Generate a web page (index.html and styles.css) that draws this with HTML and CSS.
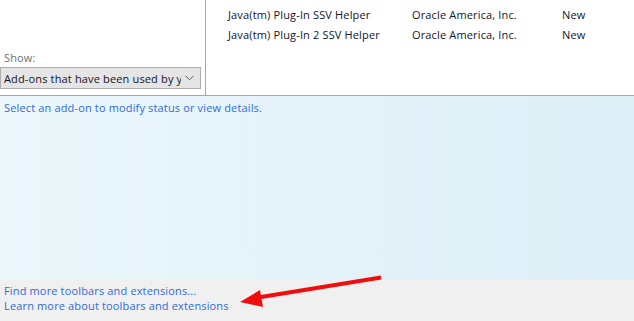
FILE: index.html
```html
<!DOCTYPE html>
<html>
<head>
<meta charset="utf-8">
<link rel="stylesheet" href="styles.css">
</head>
<body>
<div class="window">
  <div class="top">
    <div class="filter">
      <div class="show-label">Show:</div>
      <div class="select">
        <span class="select-text">Add-ons that have been used by your browser</span>
        <svg class="chev" width="9" height="6" viewBox="0 0 9 6"><path d="M0.5 0.8 L4.5 4.8 L8.5 0.8" fill="none" stroke="#5a5a5a" stroke-width="1"/></svg>
      </div>
    </div>
    <div class="list">
      <div class="row"><span class="c-name">Java(tm) Plug-In SSV Helper</span><span class="c-pub">Oracle America, Inc.</span><span class="c-status">New</span></div>
      <div class="row"><span class="c-name">Java(tm) Plug-In 2 SSV Helper</span><span class="c-pub">Oracle America, Inc.</span><span class="c-status">New</span></div>
    </div>
  </div>
  <div class="details">
    <span class="link">Select an add-on to modify status or view details.</span>
  </div>
  <div class="footer">
    <span class="link">Find more toolbars and extensions...</span>
    <span class="link">Learn more about toolbars and extensions</span>
  </div>
  <svg class="arrow" width="634" height="321" viewBox="0 0 634 321">
    <line x1="381" y1="277.5" x2="255" y2="298" stroke="#f20d0d" stroke-width="4"/>
    <polygon points="240,302 260,290 263,307" fill="#f20d0d"/>
  </svg>
</div>
</body>
</html>
```
FILE: styles.css
```css
* { box-sizing: border-box; }
html, body { margin: 0; padding: 0; }
body {
  font-family: "Open Sans", "Noto Sans", sans-serif;
  font-size: 11px;
  letter-spacing: 0.15px;
  color: #14142a;
  background: #fff;
}
.window {
  position: relative;
  width: 634px;
  height: 321px;
  display: flex;
  flex-direction: column;
  overflow: hidden;
}
.top {
  height: 96px;
  display: flex;
  border-bottom: 1px solid #a7a7a7;
  background: #fff;
}
.filter {
  width: 206px;
  border-right: 1px solid #a7a7a7;
  display: flex;
  flex-direction: column;
  justify-content: flex-end;
  padding-bottom: 6px;
}
.show-label {
  color: #707070;
  padding-left: 4px;
  line-height: 16px;
  margin-bottom: 1px;
}
.select {
  width: 201px;
  height: 22px;
  border: 1px solid #adadad;
  background: #e5e5e5;
  display: flex;
  align-items: center;
  padding: 0 6px 0 3px;
  gap: 4px;
}
.select-text {
  flex: 1;
  overflow: hidden;
  white-space: nowrap;
}
.chev { flex: none; }
.list {
  flex: 1;
  padding: 5px 0 0 22px;
}
.row {
  display: flex;
  height: 20px;
  line-height: 20px;
  white-space: nowrap;
}
.c-name { width: 184px; }
.c-pub { width: 150px; }
.c-status { width: 60px; }
.details {
  height: 184px;
  padding: 4px 4px;
  line-height: 16px;
  background: linear-gradient(to right, #ebf7fb 0%, #e4f2f9 50%, #dceef6 100%);
}
.footer {
  flex: 1;
  background: #f0f0f0;
  padding: 3px 4px 0;
  display: flex;
  flex-direction: column;
  align-items: flex-start;
  line-height: 15px;
}
.link { color: #2f6cd8; }
.arrow {
  position: absolute;
  left: 0;
  top: 0;
  pointer-events: none;
}
```
